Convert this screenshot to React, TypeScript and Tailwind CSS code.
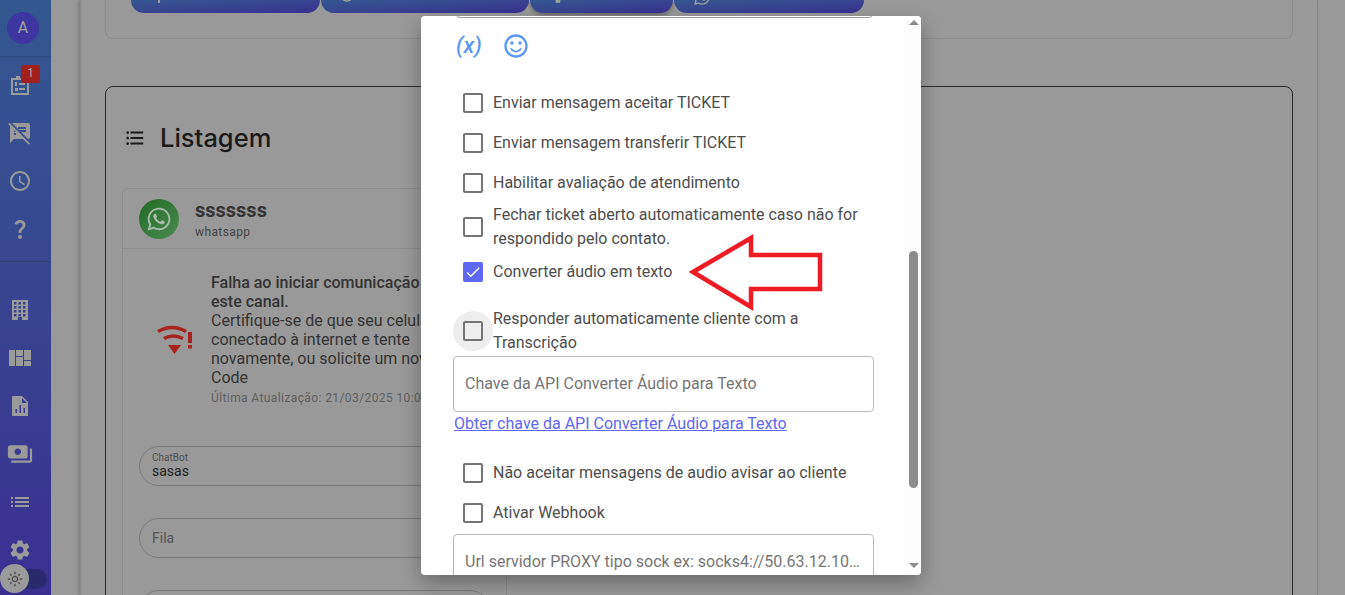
import React from "react";
import { FaWhatsapp } from "react-icons/fa";
import {
  MdAccessTime,
  MdCheck,
  MdFormatListBulleted,
  MdList,
  MdOutlineLightMode,
  MdOutlineSentimentSatisfied,
  MdPayments,
  MdQuestionMark,
  MdSettings,
  MdSpeakerNotesOff,
  MdTimelapse,
} from "react-icons/md";

const font = "font-['Roboto',sans-serif]";

function ClipboardIcon() {
  return (
    <svg width="24" height="24" viewBox="0 0 24 24" fill="currentColor">
      <path fillRule="evenodd" d="M3 5h5V3h4v2h9v17H3V5zm2 2v13h14V7H5z" />
      <rect x="7" y="9" width="2" height="4" />
      <rect x="11" y="10" width="6" height="2" />
      <rect x="7" y="15" width="3" height="3" />
      <rect x="11" y="15" width="6" height="2" />
    </svg>
  );
}

function BuildingIcon() {
  const windows = [];
  for (let r = 0; r < 4; r++) {
    for (let c = 0; c < 3; c++) {
      windows.push(`M${6 + c * 4.5} ${4 + r * 4}h2.5v2.5h-2.5z`);
    }
  }
  return (
    <svg width="24" height="24" viewBox="0 0 24 24" fill="currentColor">
      <path fillRule="evenodd" d={`M4 2h16v20h-6v-3h-4v3H4z ${windows.join(" ")}`} />
    </svg>
  );
}

function BoardIcon() {
  return (
    <svg width="24" height="24" viewBox="0 0 24 24" fill="currentColor">
      <rect x="1" y="4" width="6" height="16" />
      <rect x="8" y="4" width="7" height="6" />
      <rect x="8" y="11" width="7" height="9" />
      <rect x="16" y="4" width="7" height="10" />
      <rect x="16" y="15" width="7" height="5" />
    </svg>
  );
}

function ReportIcon() {
  return (
    <svg width="24" height="24" viewBox="0 0 24 24" fill="currentColor">
      <path
        fillRule="evenodd"
        d="M5 2h9l6 6v14H5a1.500 1.500 0 0 1-1-1V3a1.500 1.500 0 0 1 1-1zM14 4v5h5zM7.500 15v4h1.500v-4zM11.500 11v8h1.500v-8zM15.500 14v5h1.500v-5z"
      />
    </svg>
  );
}

function WifiAlert() {
  return (
    <svg width="36" height="30" viewBox="0 0 36 30" fill="none" className="text-[#a8231f]">
      <path d="M1 6.500Q15 -1.500 29 6.500" stroke="currentColor" strokeWidth="3.600" />
      <path d="M7 13.500Q16 8.500 26 13.500" stroke="currentColor" strokeWidth="3.600" />
      <path d="M11 20h13l-6.500 9z" fill="currentColor" />
      <rect x="31" y="7" width="4" height="11" fill="currentColor" />
      <rect x="31" y="20" width="4" height="3.500" fill="currentColor" />
    </svg>
  );
}

function Sidebar() {
  return (
    <aside className="relative w-[51px] h-full shrink-0 bg-gradient-to-b from-[#33578f] to-[#3a2f91] text-[#9a9a9a] flex flex-col">
      <div className="h-[57px] shrink-0 border-b border-[#2f4a80] flex items-center pl-[7px]">
        <div className="w-8 h-8 rounded-full bg-[#3d36a0] flex items-center justify-center text-[16px] text-[#9f9f9f]">
          A
        </div>
      </div>
      <div className="h-[205px] shrink-0 border-b border-[#2e4078] flex flex-col pt-4 gap-6 pl-[8px]">
        <div className="relative w-6 h-6">
          <ClipboardIcon />
          <span className="absolute -top-[8px] left-[13px] w-[19px] h-[18px] rounded-[3px] bg-[#a31f1c] text-[12px] leading-[16px] text-center text-[#a8a8a8]">
            1
          </span>
        </div>
        <MdSpeakerNotesOff size={24} />
        <MdAccessTime size={24} />
        <MdQuestionMark size={24} />
      </div>
      <div className="flex flex-col pt-9 gap-6 pl-[8px]">
        <BuildingIcon />
        <BoardIcon />
        <ReportIcon />
        <MdPayments size={24} className="scale-110" />
        <MdList size={24} />
        <MdSettings size={24} />
      </div>
      <div className="absolute left-[14px] top-[569px] w-[33px] h-5 rounded-full bg-[#292a6e]" />
      <div className="absolute left-0 top-[564px] w-[29px] h-[29px] rounded-full bg-[#9a9a9a] flex items-center justify-center text-[#4a4a4a]">
        <MdOutlineLightMode size={16} />
      </div>
    </aside>
  );
}

function Pill({ label, value, mt }: { label?: string; value: string; mt: string }) {
  return (
    <div className={`${mt} h-10 rounded-[20px] border border-[#7a7a7a] px-3 flex flex-col justify-center shrink-0`}>
      {label && <span className="text-[10px] leading-[10px] text-[#4c4c4c]">{label}</span>}
      <span className={label ? "text-[14px] leading-[16px] text-[#1c1c1c]" : "text-[14px] text-[#555555]"}>{value}</span>
    </div>
  );
}

function TopButton({ w, pl, shadow, children }: { w: string; pl: string; shadow?: boolean; children: React.ReactNode }) {
  return (
    <div
      className={`${w} ${pl} ${shadow ? "shadow-[0_2px_4px_rgba(0,0,0,0.35)]" : ""} h-[13px] rounded-b-[14px] bg-gradient-to-br from-[#33578f] to-[#3a2f91] overflow-hidden text-[#a0a0a0]`}
    >
      {children}
    </div>
  );
}

function Background() {
  return (
    <div className="w-full h-full flex bg-[#999999] overflow-hidden">
      <Sidebar />
      <div className="w-[29px] shrink-0" />
      <main className="flex-1 min-w-0 pl-[24px] border-x border-l-[#8a8a8a] border-r-[#858585] shadow-[-2px_0_3px_rgba(0,0,0,0.18)]">
        <div className="w-[1188px] h-[39px] rounded-b-lg border border-t-0 border-[#8c8c8c] pl-[25px] flex gap-[1px] items-start">
          <TopButton w="w-[189px]" pl="pl-[27px]">
            <div className="w-[2px] h-[3px] bg-[#a0a0a0]" />
          </TopButton>
          <TopButton w="w-[208px]" pl="pl-[18px]">
            <MdTimelapse size={16} className="-mt-[13px]" />
          </TopButton>
          <TopButton w="w-[143px]" pl="pl-[17px]" shadow>
            <MdSettings size={22} className="-mt-[17px]" />
          </TopButton>
          <TopButton w="w-[190px]" pl="pl-[19px]">
            <FaWhatsapp size={18} className="-mt-[12px]" />
          </TopButton>
        </div>
        <section className="mt-[47px] w-[1188px] h-[560px] rounded-t-lg border border-[#2a2a2a] pl-4 pt-[33px]">
          <div className="flex items-center h-9 pl-[2px] text-[#1a1a1a]">
            <MdFormatListBulleted size={22} />
            <h2 className="ml-[14px] text-[25.5px] font-['Inter',sans-serif] font-medium">Listagem</h2>
          </div>
          <div className="mt-[32px] w-[385px] h-[420px] rounded-t-md border border-[#8c8c8c] flex flex-col">
            <div className="h-[60px] shrink-0 border-b border-[#8c8c8c] flex items-center pl-4">
              <div className="w-10 h-10 rounded-full bg-gradient-to-br from-[#1f6b24] to-[#4c8a50] flex items-center justify-center text-[#a8bda9]">
                <FaWhatsapp size={26} />
              </div>
              <div className="ml-4 flex flex-col">
                <span className="text-[20px] leading-[22px] font-bold text-[#333333]">sssssss</span>
                <span className="mt-1 text-[12px] leading-[14px] tracking-[0.4px] text-[#444444]">whatsapp</span>
              </div>
            </div>
            <div className="px-4 flex flex-col">
              <div className="mt-6 flex items-center pl-[18px]">
                <div className="w-[54px] shrink-0">
                  <WifiAlert />
                </div>
                <div className="w-[275px] text-[16px] leading-[19px] text-[#333333]">
                  <p className="font-medium">Falha ao iniciar comunicação para este canal.</p>
                  <p>Certifique-se de que seu celular esteja conectado à internet e tente novamente, ou solicite um novo QR Code</p>
                  <p className="mt-[3px] text-[12px] leading-[16px] tracking-[0.4px] text-[#5f5f5f]">Última Atualização: 21/03/2025 10:05</p>
                </div>
              </div>
              <Pill label="ChatBot" value="sasas" mt="mt-[40px]" />
              <Pill value="Fila" mt="mt-[32px]" />
              <Pill value="" mt="mt-[32px]" />
            </div>
          </div>
        </section>
      </main>
      <div className="w-[27px] shrink-0" />
    </div>
  );
}

function Check({ checked, hover, label, h }: { checked?: boolean; hover?: boolean; label: string; h: string }) {
  return (
    <div className={`flex items-center ${h} pl-[42px] pr-[30px]`}>
      <span className="relative w-5 h-5 shrink-0">
        {hover && <span className="absolute -left-[10px] -top-[10px] w-10 h-10 rounded-full bg-[#eeeeee]" />}
        <span
          className={
            checked
              ? "absolute inset-0 rounded-[2px] bg-[#5f66f1] text-white flex items-center justify-center"
              : "absolute inset-0 rounded-[2px] border-2 border-[#757575]"
          }
        >
          {checked && <MdCheck size={18} />}
        </span>
      </span>
      <span className="ml-[10px] text-[16px] leading-6 text-[#4d4d4d]">{label}</span>
    </div>
  );
}

function Modal() {
  return (
    <div className="absolute left-[421px] top-[16px] w-[500px] h-[559px] bg-white rounded-[4px] shadow-[0_8px_20px_rgba(0,0,0,0.3)] overflow-hidden flex">
      <div className={`w-[483px] h-full shrink-0 ${font}`}>
        <div className="ml-[35px] mr-[31px] -mt-[40px] h-[42px] border border-[#9a9a9a] rounded-[4px]" />
        <div className="flex items-center h-[55px] pl-[35px] text-[#5a96f5]">
          <span className="text-[22px] font-medium italic leading-none">(x)</span>
          <MdOutlineSentimentSatisfied size={28} className="ml-[20px]" />
        </div>
        <div className="h-[10px]" />
        <Check label="Enviar mensagem aceitar TICKET" h="h-10" />
        <Check label="Enviar mensagem transferir TICKET" h="h-10" />
        <Check label="Habilitar avaliação de atendimento" h="h-10" />
        <Check label="Fechar ticket aberto automaticamente caso não for respondido pelo contato." h="h-[48px]" />
        <Check checked label="Converter áudio em texto" h="h-[42px]" />
        <div className="h-[14px]" />
        <Check hover label="Responder automaticamente cliente com a Transcrição" h="h-[48px]" />
        <div className="ml-[32px] mr-[30px] mt-[1px] h-14 border border-[#b8b8b8] rounded-[4px] flex items-center px-[11px] text-[16px] text-[#757575]">
          Chave da API Converter Áudio para Texto
        </div>
        <a className="ml-[33px] block text-[16px] leading-6 text-[#5f66f1] underline">
          Obter chave da API Converter Áudio para Texto
        </a>
        <div className="h-[17px]" />
        <Check label="Não aceitar mensagens de audio avisar ao cliente" h="h-10" />
        <Check label="Ativar Webhook" h="h-10" />
        <div className="ml-[32px] mr-[30px] mt-[1px] h-14 border border-[#b8b8b8] rounded-[4px] flex items-center px-[11px] text-[16px] text-[#757575]">
          <span className="truncate">Url servidor PROXY tipo sock ex: socks4://50.63.12.101:1080</span>
        </div>
      </div>
      <div className="w-[17px] h-full shrink-0 bg-[#fdfdfd] flex flex-col items-center pr-[2px] pl-[4px]">
        <div className="mt-1 w-0 h-0 border-x-[5px] border-x-transparent border-b-[5px] border-b-[#8c8c8c]" />
        <div className="mt-[226px] w-[9px] h-[237px] rounded-full bg-[#8c8c8c]" />
        <div className="mt-[75px] w-0 h-0 border-x-[5px] border-x-transparent border-t-[5px] border-t-[#8c8c8c]" />
      </div>
    </div>
  );
}

export default function App() {
  return (
    <div className={`relative w-[1345px] h-[595px] overflow-hidden ${font}`}>
      <Background />
      <Modal />
      {/* seta vermelha de anotacao */}
      <svg className="absolute left-[685px] top-[232px]" width="140" height="82" viewBox="0 0 140 82" fill="none">
        <path d="M8 40 L66 6 V23 H135 V57 H66 V75 Z" stroke="#ed1c24" strokeWidth="4.500" />
      </svg>
    </div>
  );
}
